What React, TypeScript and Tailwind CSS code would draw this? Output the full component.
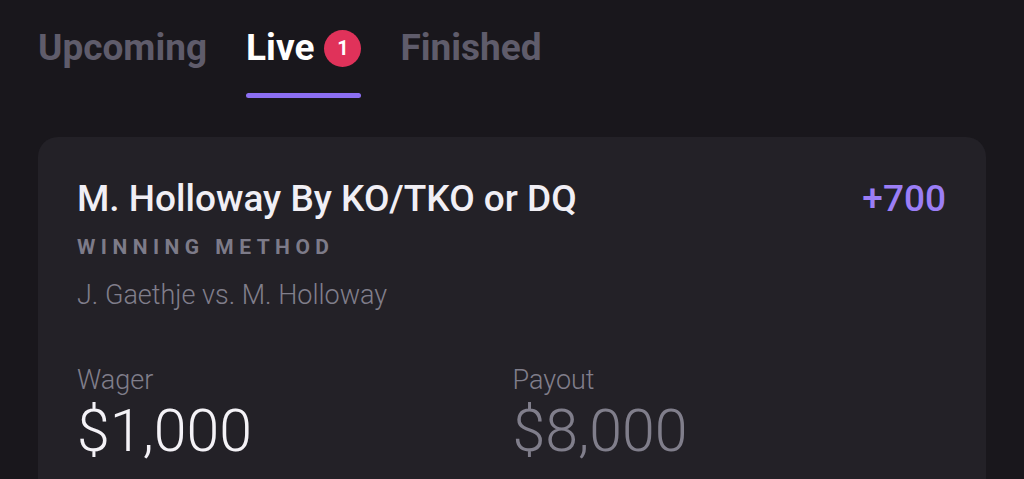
export default function App() {
  return (
    <div className="w-[1024px] h-[479px] overflow-hidden bg-[#19171c] font-['Roboto',sans-serif]">
      <div className="flex items-start pl-[38px] pt-[24px]">
        <div className="text-[37px] leading-[48px] font-bold text-[#5f5c6b]">Upcoming</div>
        <div className="ml-[39px] flex flex-col">
          <div className="flex items-center gap-[10px]">
            <span className="text-[37px] leading-[48px] font-bold text-white">Live</span>
            <span className="flex items-center justify-center w-[37px] h-[37px] rounded-full bg-[#e0325a] text-white text-[20px] font-bold">1</span>
          </div>
          <div className="mt-[21px] h-[5px] rounded-full bg-[#8c6ff2]"></div>
        </div>
        <div className="ml-[39px] text-[37px] leading-[48px] font-bold text-[#5f5c6b]">Finished</div>
      </div>
      <div className="mx-[38px] mt-[39px] rounded-[20px] bg-[#232127] pl-[39px] pr-[40px] pt-[40px] pb-[80px]">
        <div className="flex items-start justify-between">
          <div className="text-[37px] leading-[44px] font-medium text-[#f1eff5]">M. Holloway By KO/TKO or DQ</div>
          <div className="text-[37px] leading-[44px] font-medium text-[#9b7ef6]">+700</div>
        </div>
        <div className="mt-[14px] text-[21px] leading-[24px] font-bold tracking-[0.26em] text-[#7d7b89]">WINNING METHOD</div>
        <div className="mt-[21px] text-[27px] leading-[30px] font-light text-[#807e8b]">J. Gaethje vs. M. Holloway</div>
        <div className="mt-[54px] grid grid-cols-2">
          <div>
            <div className="text-[27px] leading-[32px] font-light text-[#807e8b]">Wager</div>
            <div className="mt-[3px] text-[59px] leading-[64px] font-light text-[#f4f2f7]">$1,000</div>
          </div>
          <div className="pl-[1px]">
            <div className="text-[27px] leading-[32px] font-light text-[#807e8b]">Payout</div>
            <div className="mt-[3px] text-[59px] leading-[64px] font-light text-[#807e8b]">$8,000</div>
          </div>
        </div>
      </div>
    </div>
  );
}
